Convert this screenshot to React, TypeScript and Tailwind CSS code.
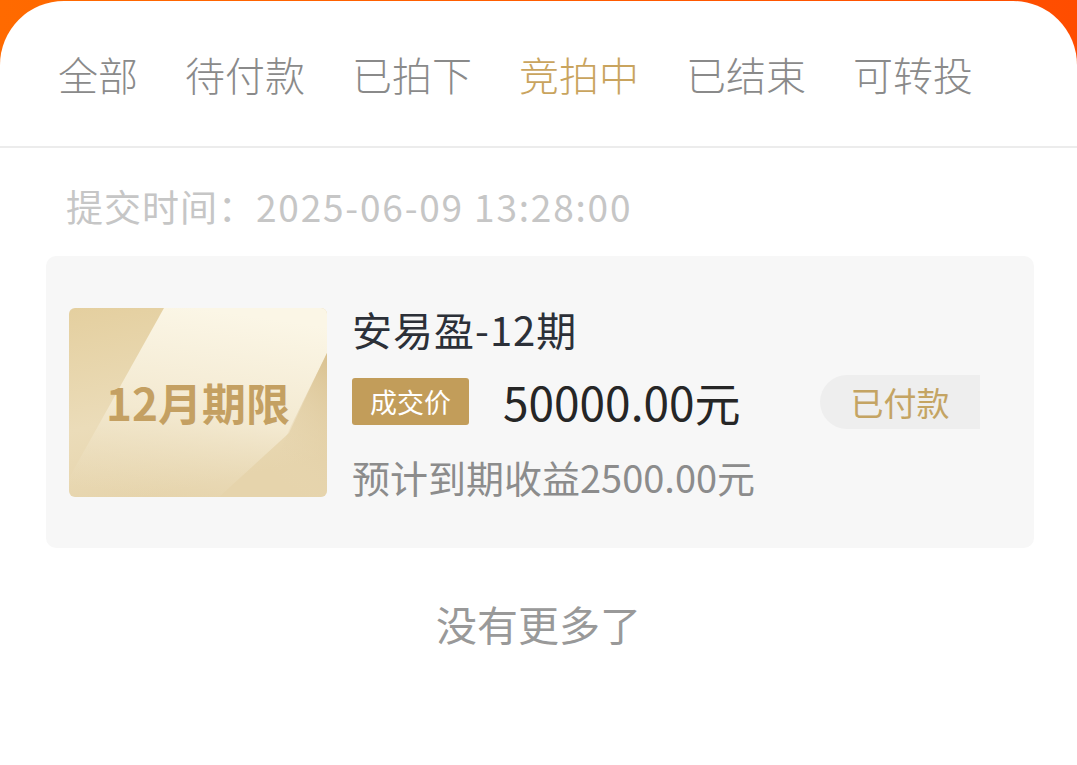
import React from "react";

const tabs = ["全部", "待付款", "已拍下", "竞拍中", "已结束", "可转投"];

export default function App() {
  return (
    <div
      className="w-[1077px] h-[765px] overflow-hidden bg-gradient-to-r from-[#ff6a00] to-[#ff4d00]"
      style={{ fontFamily: '"Noto Sans CJK SC", "Noto Sans", sans-serif' }}
    >
      <div className="mt-[1px] h-[764px] bg-white rounded-t-[64px] flex flex-col">
        <div className="h-[147px] flex items-center pl-[58px] gap-[47px] border-b-2 border-[#ececec]">
          {tabs.map((t) => (
            <span
              key={t}
              className={`text-[40px] font-light leading-none ${
                t === "竞拍中" ? "text-[#c9a45e]" : "text-[#8a8a8a]"
              }`}
            >
              {t}
            </span>
          ))}
        </div>
        <div className="pl-[66px] pt-[40px] text-[37px] leading-none text-[#c6c6c6]">
          <span className="tracking-[1px]">提交时间：</span>
          <span className="tracking-[1.8px]">2025-06-09 13:28:00</span>
        </div>
        <div className="ml-[46px] mr-[43px] mt-[31px] h-[292px] rounded-[10px] bg-[#f7f7f7] flex items-center pl-[23px]">
          <div className="relative w-[258px] h-[189px] rounded-[6px] overflow-hidden flex items-center justify-center">
            <svg className="absolute inset-0" width="258" height="189" viewBox="0 0 258 189">
              <defs>
                <linearGradient id="base" x1="0" y1="0" x2="0.3" y2="1">
                  <stop offset="0" stopColor="#e4cf9f" />
                  <stop offset="0.6" stopColor="#ebdcb9" />
                  <stop offset="1" stopColor="#e6d4ac" />
                </linearGradient>
                <linearGradient id="light" x1="0.5" y1="0" x2="0.3" y2="1">
                  <stop offset="0" stopColor="#fbf6e6" />
                  <stop offset="0.55" stopColor="#f3e9d0" />
                  <stop offset="1" stopColor="#ecdfc0" stopOpacity="0" />
                </linearGradient>
                <linearGradient id="wedge" x1="1" y1="0" x2="0.6" y2="1">
                  <stop offset="0" stopColor="#d9c18f" />
                  <stop offset="1" stopColor="#e8d8b5" stopOpacity="0" />
                </linearGradient>
              </defs>
              <rect width="258" height="189" fill="url(#base)" />
              <polygon points="95,0 258,0 258,45 220,125 150,189 0,189 0,170" fill="url(#light)" />
              <polygon points="258,45 258,189 190,189 222,118" fill="url(#wedge)" />
            </svg>
            <span className="relative text-[44px] font-bold leading-none text-[#c4a062]">
              12月期限
            </span>
          </div>
          <div className="ml-[25px] flex flex-col">
            <div className="text-[40px] tracking-[1px] leading-none text-[#2c3038]">安易盈-12期</div>
            <div className="mt-[29px] flex items-center">
              <span className="h-[47px] w-[117px] rounded-[3px] bg-[#c29d5a] text-white text-[27px] flex items-center justify-center leading-none">
                成交价
              </span>
              <span className="ml-[34px] text-[46px] leading-none text-[#262626]">
                50000.00元
              </span>
            </div>
            <div className="mt-[33px] text-[38px] leading-none text-[#8c8c8c]">
              预计到期收益2500.00元
            </div>
          </div>
          <div className="ml-auto mr-[54px] h-[54px] w-[160px] rounded-l-full bg-[#eeeeee] flex items-center justify-center text-[33px] leading-none text-[#c4a463]">
            已付款
          </div>
        </div>
        <div className="mt-[55px] text-center text-[41px] leading-none text-[#999999]">
          没有更多了
        </div>
      </div>
    </div>
  );
}
